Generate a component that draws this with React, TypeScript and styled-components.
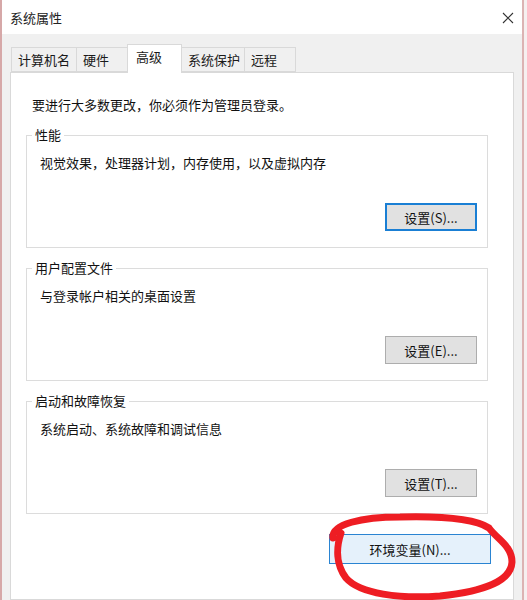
import React from "react";
import styled, { createGlobalStyle } from "styled-components";

const GlobalStyle = createGlobalStyle`
  html, body { margin: 0; padding: 0; background: #f6f0f0; }
  body { font-family: "Noto Sans CJK SC", "Noto Sans", sans-serif; font-size: 13px; color: #111; }
`;

const Window = styled.div`
  position: relative;
  box-sizing: border-box;
  width: 524px;
  height: 600px;
  display: flex;
  flex-direction: column;
  background: #f0f0f0;
  border-left: 2px solid #d6a8a8;
  border-right: 2px solid #dcb3b3;
  overflow: hidden;
`;

const TitleBar = styled.div`
  box-sizing: border-box;
  height: 34px;
  flex: none;
  background: #fff;
  display: flex;
  align-items: center;
  justify-content: space-between;
  padding: 1px 7px 0 8px;
`;

const Title = styled.span`
  font-size: 13px;
  line-height: 16px;
  color: #222;
`;

const CloseBtn = styled.div`
  width: 14px;
  height: 14px;
  display: flex;
  align-items: center;
  justify-content: center;
`;

const Content = styled.div`
  flex: 1;
  display: flex;
  flex-direction: column;
  padding: 10px 8px 0 8px;
  min-height: 0;
`;

const TabStrip = styled.div`
  display: flex;
  align-items: flex-end;
  height: 28px;
  padding-left: 1px;
  position: relative;
  z-index: 1;
`;

const Tab = styled.div<{ $w: number; $active?: boolean }>`
  box-sizing: border-box;
  width: ${(p) => p.$w}px;
  height: ${(p) => (p.$active ? 29 : 25)}px;
  margin-bottom: ${(p) => (p.$active ? -1 : 0)}px;
  margin-left: -1px;
  background: ${(p) => (p.$active ? "#fff" : "#f0f0f0")};
  border: 1px solid #d9d9d9;
  border-bottom: ${(p) => (p.$active ? "none" : "1px solid #d9d9d9")};
  display: flex;
  align-items: ${(p) => (p.$active ? "flex-start" : "center")};
  padding: ${(p) => (p.$active ? "4px 0 0 8px" : "0 0 0 6px")};
  font-size: 13px;
  line-height: 16px;
  color: #1a1a1a;
  &:first-child { margin-left: 0; }
`;

const Panel = styled.div`
  flex: 1;
  background: #fff;
  border: 1px solid #d9d9d9;
  padding: 0 25px 0 15px;
  display: flex;
  flex-direction: column;
`;

const Intro = styled.p`
  margin: 24px 0 14px 6px;
  font-size: 13px;
  line-height: 16px;
`;

const Group = styled.fieldset`
  margin: 0 0 12px 0;
  padding: 0;
  border: 1px solid #dcdcdc;
  min-width: 0;
`;

const Legend = styled.legend`
  margin-left: 5px;
  padding: 0 3px;
  font-size: 13px;
  line-height: 16px;
`;

const GroupBody = styled.div<{ $gap: number }>`
  display: flex;
  flex-direction: column;
  padding: 12px 10px 16px 13px;
  gap: ${(p) => p.$gap}px;
`;

const Desc = styled.div`
  font-size: 13px;
  line-height: 16px;
`;

const Button = styled.button<{ $variant?: "default" | "hover" | "normal"; $w: number }>`
  box-sizing: border-box;
  align-self: flex-end;
  width: ${(p) => p.$w}px;
  height: ${(p) => (p.$variant === "hover" ? 30 : 28)}px;
  font-family: "Noto Sans CJK SC", "Noto Sans", sans-serif;
  font-size: 13px;
  color: #111;
  padding: 0;
  background: ${(p) => (p.$variant === "hover" ? "#e5f1fb" : "#e1e1e1")};
  border: ${(p) =>
    p.$variant === "default"
      ? "2px solid #1a7fd4"
      : p.$variant === "hover"
      ? "1px solid #2a84d2"
      : "1px solid #adadad"};
`;

const EnvRow = styled.div`
  display: flex;
  justify-content: flex-end;
  margin: 8px -3px 0 0;
`;

const Annotation = styled.svg`
  position: absolute;
  left: -2px;
  top: 0;
  width: 527px;
  height: 600px;
  pointer-events: none;
  z-index: 5;
`;

const tabs = [
  { label: "计算机名", w: 66 },
  { label: "硬件", w: 52 },
  { label: "高级", w: 55, active: true },
  { label: "系统保护", w: 64 },
  { label: "远程", w: 52 },
];

const groups = [
  { title: "性能", desc: "视觉效果，处理器计划，内存使用，以及虚拟内存", btn: "设置(S)...", variant: "default" as const, gap: 32 },
  { title: "用户配置文件", desc: "与登录帐户相关的桌面设置", btn: "设置(E)...", variant: "normal" as const, gap: 32 },
  { title: "启动和故障恢复", desc: "系统启动、系统故障和调试信息", btn: "设置(T)...", variant: "normal" as const, gap: 32 },
];

export default function App() {
  return (
    <>
      <GlobalStyle />
      <Window>
        <TitleBar>
          <Title>系统属性</Title>
          <CloseBtn>
            <svg width="12" height="12" viewBox="0 0 12 12">
              <path d="M1 1 L11 11 M11 1 L1 11" stroke="#333" strokeWidth="1.1" />
            </svg>
          </CloseBtn>
        </TitleBar>
        <Content>
          <TabStrip>
            {tabs.map((t) => (
              <Tab key={t.label} $w={t.w} $active={t.active}>
                {t.label}
              </Tab>
            ))}
          </TabStrip>
          <Panel>
            <Intro>要进行大多数更改，你必须作为管理员登录。</Intro>
            {groups.map((g) => (
              <Group key={g.title}>
                <Legend>{g.title}</Legend>
                <GroupBody $gap={g.gap}>
                  <Desc>{g.desc}</Desc>
                  <Button $variant={g.variant} $w={92}>
                    {g.btn}
                  </Button>
                </GroupBody>
              </Group>
            ))}
            <EnvRow>
              <Button $variant="hover" $w={162}>
                环境变量(N)...
              </Button>
            </EnvRow>
          </Panel>
        </Content>
        <Annotation viewBox="0 0 527 600">
          <path
            d="M333 538 C331 524, 362 517, 400 517 C440 516, 474 518, 489 528 C498 540, 512 546, 512 562 C511 580, 488 591, 440 596 C400 599, 360 594, 346 578 C336 565, 336 548, 341 533"
            fill="none"
            stroke="#ee1d23"
            strokeWidth="7"
            strokeLinecap="round"
            strokeLinejoin="round"
          />
        </Annotation>
      </Window>
    </>
  );
}
